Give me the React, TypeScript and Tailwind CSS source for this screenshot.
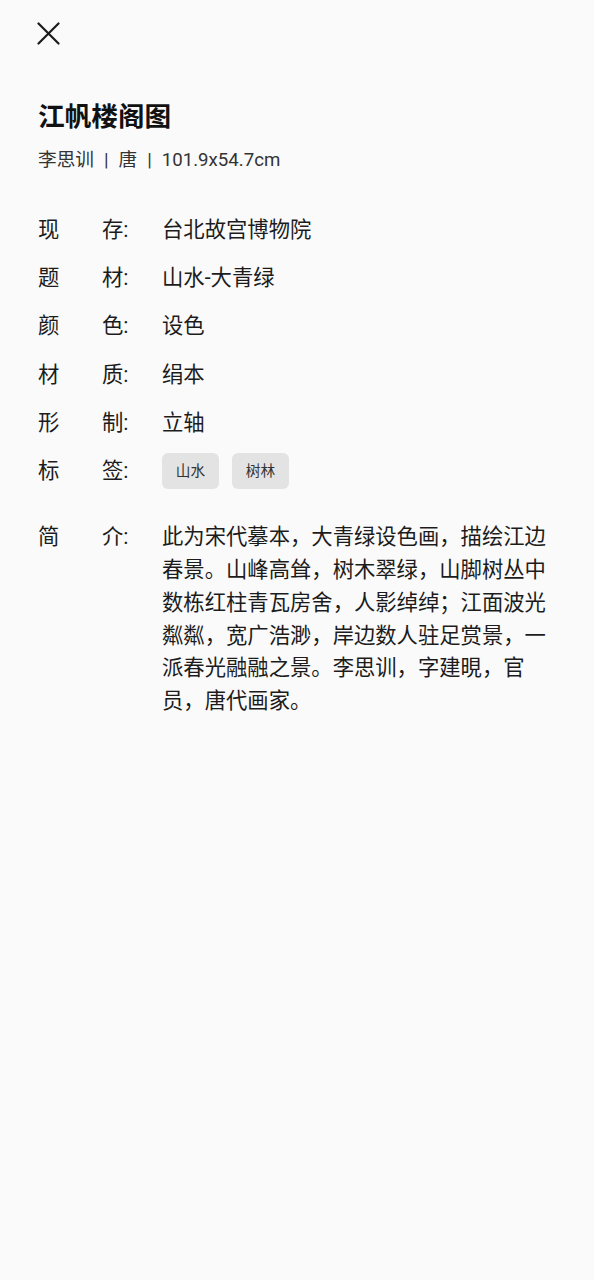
import React from "react";

const rows: [string, string, string][] = [
  ["现", "存:", "台北故宫博物院"],
  ["题", "材:", "山水-大青绿"],
  ["颜", "色:", "设色"],
  ["材", "质:", "绢本"],
  ["形", "制:", "立轴"],
];

export default function App() {
  return (
    <div
      className="min-h-[1280px] w-full bg-[#fafafa] text-[#1c1c1c]"
      style={{ fontFamily: 'Roboto, "Noto Sans CJK SC", sans-serif' }}
    >
      <div className="pl-[37px] pt-[22px]">
        <svg width="23" height="23" viewBox="0 0 23 23" fill="none">
          <path d="M1.5 1.5L21.5 21.5M21.5 1.5L1.5 21.5" stroke="#1a1a1a" strokeWidth="2.2" strokeLinecap="round" />
        </svg>
      </div>

      <div className="px-[38px]">
        <h1 className="mt-[54px] text-[26.67px] font-bold leading-[36px] text-[#111]">江帆楼阁图</h1>
        <div className="mt-[13px] text-[18.67px] leading-[24px] text-[#333]">
          李思训<span className="mx-[10px]">|</span>唐<span className="mx-[10px]">|</span>101.9x54.7cm
        </div>

        <div className="mt-[34px] text-[21.33px]">
          {rows.map(([a, b, v]) => (
            <div key={a} className="flex h-[48.2px] items-center">
              <span className="w-[64px]">{a}</span>
              <span className="w-[60px]">{b}</span>
              <span>{v}</span>
            </div>
          ))}
          <div className="flex h-[48.2px] items-center">
            <span className="w-[64px]">标</span>
            <span className="w-[60px]">签:</span>
            <div className="flex gap-[13px]">
              <span className="flex h-[36px] w-[57px] items-center justify-center rounded-[6px] bg-[#e3e3e3] text-[14.67px] text-[#333]">山水</span>
              <span className="flex h-[36px] w-[57px] items-center justify-center rounded-[6px] bg-[#e3e3e3] text-[14.67px] text-[#333]">树林</span>
            </div>
          </div>
          <div className="mt-[26px] flex leading-[32.8px]">
            <span className="w-[64px] shrink-0">简</span>
            <span className="w-[60px] shrink-0">介:</span>
            <p className="w-[394px]">
              此为宋代摹本，大青绿设色画，描绘江边春景。山峰高耸，树木翠绿，山脚树丛中数栋红柱青瓦房舍，人影绰绰；江面波光粼粼，宽广浩渺，岸边数人驻足赏景，一派春光融融之景。李思训，字建晛，官员，唐代画家。
            </p>
          </div>
        </div>
      </div>
    </div>
  );
}
